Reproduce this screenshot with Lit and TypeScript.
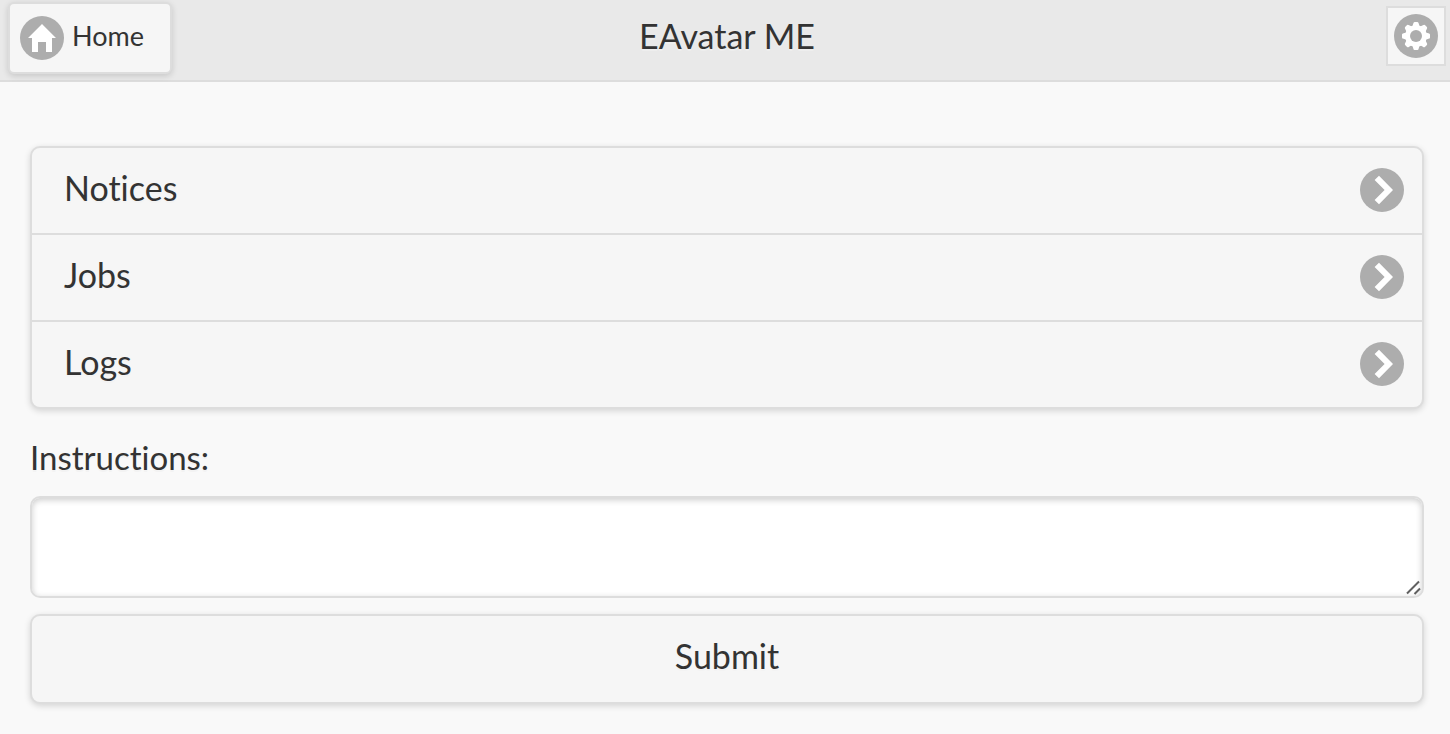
import { LitElement, html, svg, css } from "lit";
import { customElement, state } from "lit/decorators.js";

const disc = svg`<circle cx="22" cy="22" r="22" fill="#adadad" />`;

const homeIcon = html`<svg class="icon" viewBox="0 0 44 44" aria-hidden="true">
  ${disc}
  <path fill="#fff" d="M22 8 36 22H32V36H26V26H18V36H12V22H8Z" />
</svg>`;

const caratIcon = html`<svg class="icon" viewBox="0 0 44 44" aria-hidden="true">
  ${disc}
  <path fill="#fff" d="M19 7.8 33 22 19 36.2 14.6 32 24.6 22 14.6 12Z" />
</svg>`;

const teeth = [0, 45, 90, 135, 180, 225, 270, 315];

const gearIcon = html`<svg class="icon" viewBox="0 0 44 44" aria-hidden="true">
  ${disc}
  <circle cx="22" cy="22" r="10.8" fill="#fff" />
  ${teeth.map(
    (angle) => svg`<path
      fill="#fff"
      transform="rotate(${angle} 22 22)"
      d="M17.4 13Q18.9 12 19.3 9.6 19.5 8 20.6 8H23.4Q24.5 8 24.7 9.6 25.1 12 26.6 13Z"
    />`
  )}
  <circle cx="22" cy="22" r="6" fill="#adadad" />
</svg>`;

@customElement("app-root")
export class AppRoot extends LitElement {
  static styles = css`
    :host {
      display: block;
      box-sizing: border-box;
      min-height: 100vh;
      background: #f9f9f9;
      color: #333;
      font-family: "Lato", "Century Gothic", sans-serif;
      font-size: 34px;
      font-variant-ligatures: none;
      line-height: 44px;
      text-shadow: 0 2px 0 #f3f3f3;
    }
    *,
    *::before,
    *::after {
      box-sizing: border-box;
    }
    .header {
      display: grid;
      grid-template-columns: 1fr auto 1fr;
      align-items: start;
      padding: 2px 4px 6px 8px;
      background: #e9e9e9;
      border-bottom: 2px solid #ddd;
    }
    .title {
      margin: 0;
      padding-top: 12px;
      font-size: inherit;
      font-weight: 400;
      text-shadow: 0 2px 0 #eee;
    }
    .home,
    .settings {
      border: 2px solid #ddd;
      background: #f6f6f6;
      color: inherit;
      font: inherit;
      text-shadow: inherit;
      text-decoration: none;
    }
    .home {
      display: flex;
      align-items: center;
      gap: 8px;
      justify-self: start;
      padding: 12px 26px 12px 10px;
      border-radius: 6px;
      box-shadow: 0 2px 6px rgba(0, 0, 0, 0.15);
      font-size: 27px;
    }
    .home-label,
    .item-label {
      padding-bottom: 4px;
      line-height: 40px;
    }
    .settings {
      display: block;
      justify-self: end;
      margin-top: 4px;
      padding: 6px;
    }
    .icon {
      display: block;
      flex: none;
      width: 44px;
      height: 44px;
    }
    .content {
      padding: 64px 26px 30px 30px;
    }
    .list {
      margin: 0;
      padding: 0;
      list-style: none;
      border: 2px solid #ddd;
      border-radius: 10px;
      background: #f6f6f6;
      box-shadow: 0 2px 6px rgba(0, 0, 0, 0.15);
    }
    .item + .item {
      border-top: 2px solid #ddd;
    }
    .item-link {
      display: flex;
      align-items: center;
      justify-content: space-between;
      padding: 20px 18px 21px 32px;
      color: inherit;
      text-decoration: none;
    }
    .form {
      padding-top: 26px;
    }
    .label {
      display: block;
      padding-bottom: 17px;
      font-size: 33px;
    }
    .field {
      position: relative;
    }
    .input {
      display: block;
      width: 100%;
      height: 102px;
      margin: 0;
      padding: 12px;
      border: 2px solid #ddd;
      border-radius: 10px;
      outline: none;
      background: #fff;
      box-shadow: inset 0 2px 6px rgba(0, 0, 0, 0.2);
      color: inherit;
      font: inherit;
      resize: none;
    }
    .grip {
      position: absolute;
      right: 2px;
      bottom: 2px;
      width: 16px;
      height: 16px;
      pointer-events: none;
    }
    .submit {
      display: block;
      width: 100%;
      margin: 16px 0 0;
      padding: 18px 32px 24px;
      border: 2px solid #ddd;
      border-radius: 10px;
      background: #f6f6f6;
      box-shadow: 0 2px 6px rgba(0, 0, 0, 0.15);
      color: inherit;
      font: inherit;
      text-shadow: inherit;
    }
  `;

  @state() private sections = ["Notices", "Jobs", "Logs"];

  render() {
    return html`
      <header class="header">
        <a class="home" href="#home">${homeIcon}<span class="home-label">Home</span></a>
        <h1 class="title">EAvatar ME</h1>
        <button class="settings" type="button" aria-label="Settings">${gearIcon}</button>
      </header>
      <main class="content">
        <ul class="list">
          ${this.sections.map(
            (name) => html`<li class="item">
              <a class="item-link" href="#${name.toLowerCase()}"><span class="item-label">${name}</span>${caratIcon}</a>
            </li>`
          )}
        </ul>
        <form class="form" @submit=${(e: Event) => e.preventDefault()}>
          <label class="label" for="instructions">Instructions:</label>
          <div class="field">
            <textarea class="input" id="instructions" name="instructions"></textarea>
            <svg class="grip" viewBox="0 0 16 16" aria-hidden="true">
              <path d="M1 13.5 13 1.5M8.5 14 14 8.5" fill="none" stroke="#606060" stroke-width="2" />
            </svg>
          </div>
          <button class="submit" type="submit">Submit</button>
        </form>
      </main>
    `;
  }
}
